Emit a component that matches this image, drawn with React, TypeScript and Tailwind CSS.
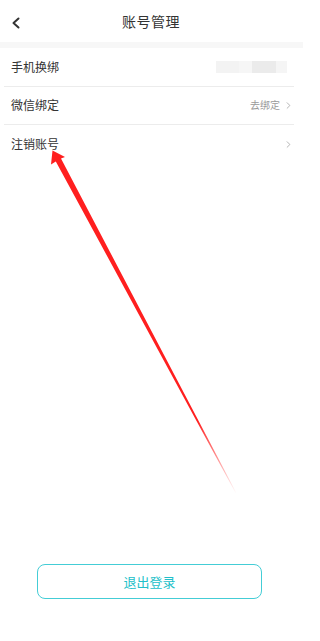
import { ChevronRight } from 'lucide-react'

const ROWS = [
  { label: '手机换绑', kind: 'phone' },
  { label: '微信绑定', kind: 'wechat' },
  { label: '注销账号', kind: 'cancel' },
]

function BlurredPhone() {
  return (
    <div className="flex h-[12px] mr-[7px]">
      <div className="w-[23px] bg-[#f3f3f3]" />
      <div className="w-[13px] bg-[#f6f6f6]" />
      <div className="w-[24px] bg-[#ebebeb]" />
      <div className="w-[11px] bg-[#f5f5f5]" />
    </div>
  )
}

function Arrow() {
  return (
    <svg className="absolute inset-0 pointer-events-none" width="303" height="641" viewBox="0 0 303 641">
      <defs>
        <linearGradient id="fade" gradientUnits="userSpaceOnUse" x1="58" y1="160" x2="236" y2="494">
          <stop offset="0" stopColor="#ff1f1f" stopOpacity="1" />
          <stop offset="0.78" stopColor="#ff1f1f" stopOpacity="1" />
          <stop offset="1" stopColor="#ff1f1f" stopOpacity="0" />
        </linearGradient>
      </defs>
      <polygon
        fill="url(#fade)"
        points="52.5,150.5 65,157 61,158.6 236.3,492.8 235.7,493.2 55.8,161.4 51,164.5"
      />
    </svg>
  )
}

export default function App() {
  return (
    <div
      className="relative w-[303px] h-[641px] bg-white flex flex-col text-[#333]"
      style={{ fontFamily: '"Noto Sans CJK SC", "Noto Sans", sans-serif' }}
    >
      {/* header */}
      <div className="relative h-[42px] flex items-center justify-center">
        <svg className="absolute left-[11px] top-[17px]" width="10" height="12" viewBox="0 0 10 12">
          <path d="M7.5 1.5 L2.5 6 L7.5 10.5" fill="none" stroke="#333" strokeWidth="2" strokeLinecap="round" strokeLinejoin="round" />
        </svg>
        <span className="text-[14px] tracking-[0.5px] ml-[-1px]">账号管理</span>
      </div>
      <div className="h-[6px] bg-[#f7f7f7]" />

      {/* rows */}
      <div className="pl-[4px] pr-[9px]">
        {ROWS.map((r, i) => (
          <div
            key={r.label}
            className={`h-[38.5px] flex items-center justify-between pl-[7px] ${i < ROWS.length - 1 ? 'border-b border-[#ececec]' : ''}`}
          >
            <span className="text-[12px] leading-none">{r.label}</span>
            {r.kind === 'phone' && <BlurredPhone />}
            {r.kind === 'wechat' && (
              <div className="flex items-center gap-[3px] text-[#9a9a9a]">
                <span className="text-[10px] leading-none">去绑定</span>
                <ChevronRight size={11} strokeWidth={1.6} className="text-[#999]" />
              </div>
            )}
            {r.kind === 'cancel' && <ChevronRight size={11} strokeWidth={1.6} className="text-[#999]" />}
          </div>
        ))}
      </div>

      <div className="flex-1" />

      <div className="flex justify-center mb-[42px]">
        <button className="w-[225px] h-[35px] ml-[-4px] rounded-[8px] border border-[#44cdd6] text-[#22bfc9] text-[13px]">
          退出登录
        </button>
      </div>

      <Arrow />
    </div>
  )
}
